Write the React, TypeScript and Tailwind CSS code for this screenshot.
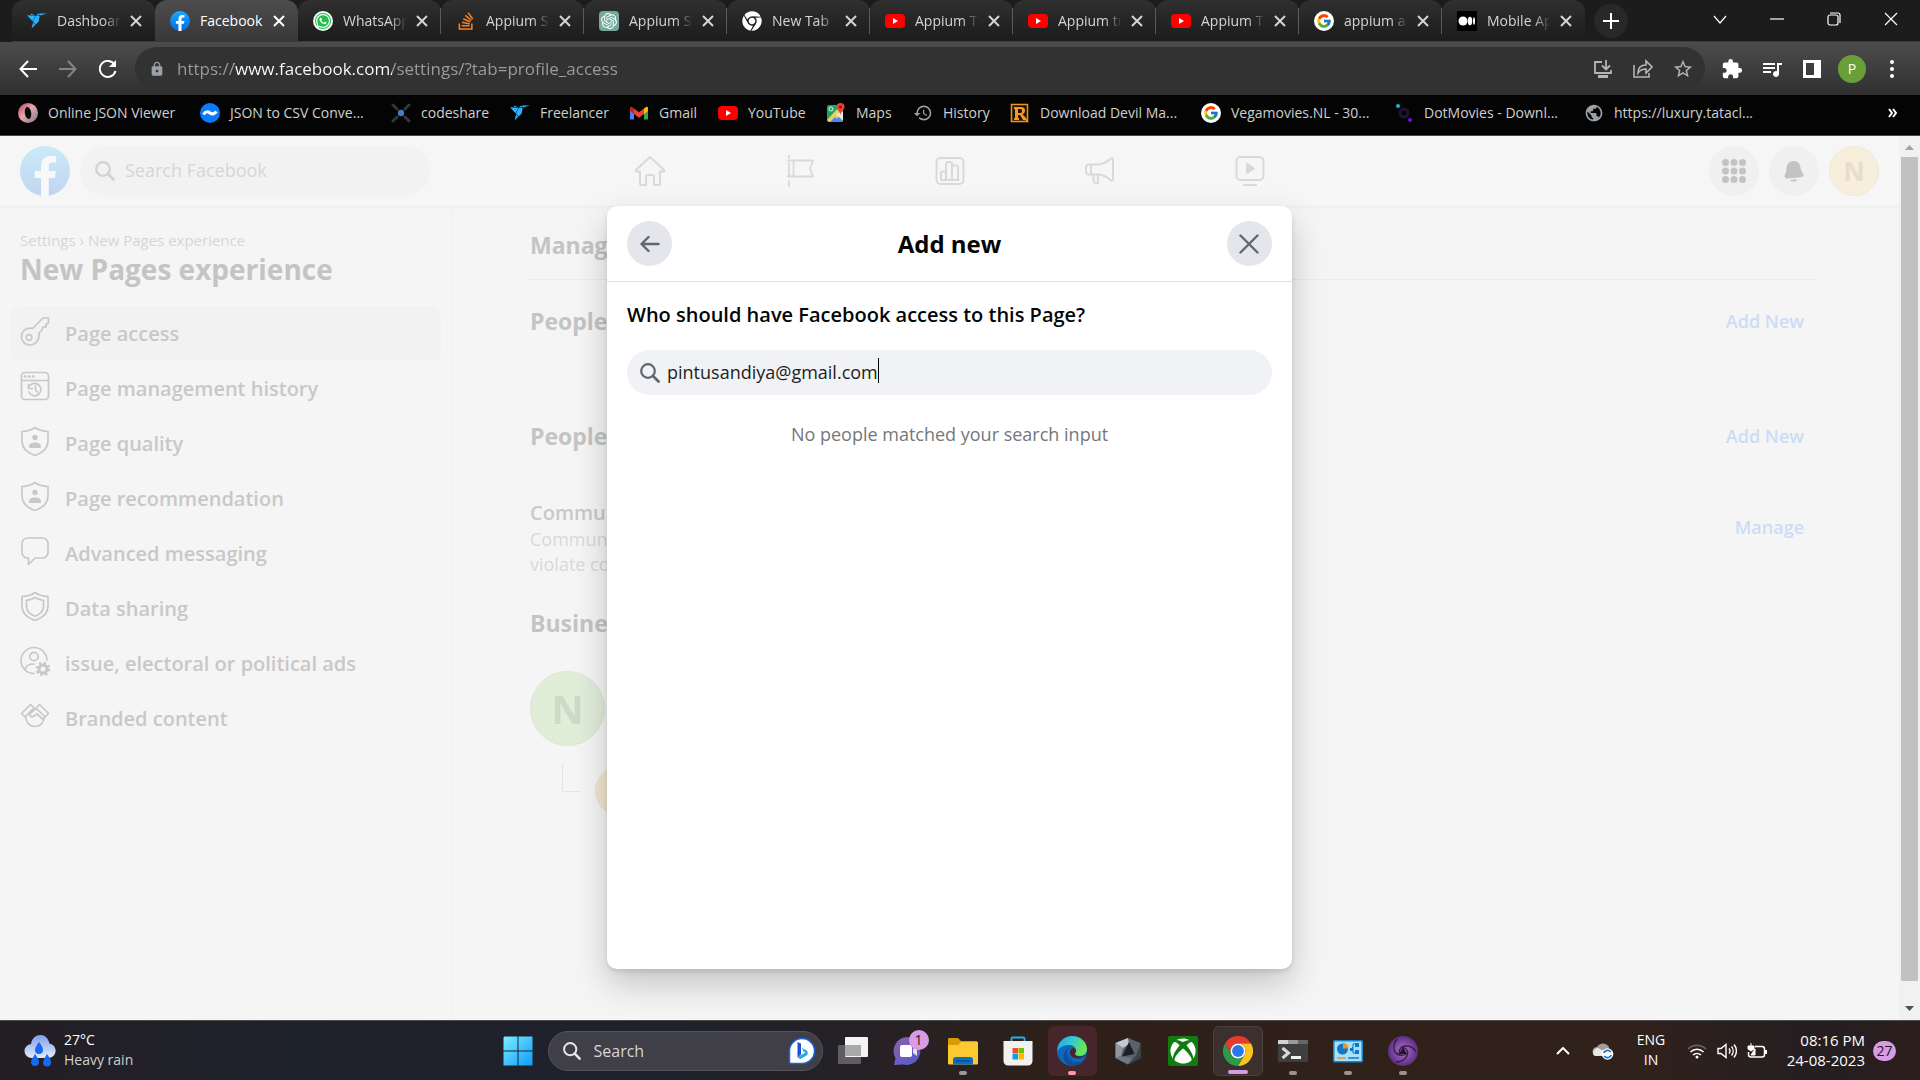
import React, { useState } from "react";
import { FcGoogle } from "react-icons/fc";
import { FaStackOverflow, FaWhatsapp, FaChrome, FaXbox } from "react-icons/fa";
import { SiFreelancer, SiOpenai } from "react-icons/si";
import {
  MdExtension,
  MdHistory,
  MdLock,
  MdQueueMusic,
  MdStarBorder,
  MdPublic,
} from "react-icons/md";

type Children = { children?: React.ReactNode };

/* ---------- brand icons ---------- */

function FacebookLogo({ id, from, to, mark, className }: { id: string; from: string; to: string; mark: string; className: string }) {
  return (
    <svg viewBox="0 0 50 50" className={className} aria-hidden="true">
      <defs>
        <linearGradient id={id} x1="0" y1="0" x2="0" y2="1">
          <stop offset="0" stopColor={from} />
          <stop offset="1" stopColor={to} />
        </linearGradient>
      </defs>
      <circle cx="25" cy="25" r="25" fill={`url(#${id})`} />
      <path
        fill={mark}
        d="M21 50V32h-6.300v-7H21v-4.500C21 14 24.500 10 31 10h5v6.500h-3.300c-3 0-3.900 1.500-3.900 4V25H36l-1.200 7h-6v18z"
      />
    </svg>
  );
}

function YouTube() {
  return (
    <svg viewBox="0 0 20 20" className="size-5" aria-hidden="true">
      <rect y="3" width="20" height="14" rx="4" fill="#f00" />
      <path d="M8 7l5 3-5 3z" fill="#fff" />
    </svg>
  );
}

function GoogleG() {
  return (
    <span className="flex size-5 items-center justify-center rounded-full bg-white">
      <FcGoogle className="size-4" />
    </span>
  );
}

function WhatsApp() {
  return (
    <span className="flex size-5 items-center justify-center rounded-full bg-[#f4fff4]">
      <span className="flex size-4 items-center justify-center rounded-full bg-[#1fc14b] text-white">
        <FaWhatsapp className="size-4" />
      </span>
    </span>
  );
}

function OpenAi() {
  return (
    <span className="flex size-5 items-center justify-center rounded-sm bg-[#74aa9c] text-white">
      <SiOpenai className="size-4" />
    </span>
  );
}

function MediumIcon() {
  return (
    <svg viewBox="0 0 20 20" className="size-5" aria-hidden="true">
      <rect width="20" height="20" rx="1" fill="#000" />
      <circle cx="6" cy="10" r="4.500" fill="#fff" />
      <ellipse cx="13" cy="10" rx="2.200" ry="4.200" fill="#fff" />
      <ellipse cx="17" cy="10" rx="1" ry="3.800" fill="#fff" />
    </svg>
  );
}

function JsonRing() {
  return (
    <svg viewBox="0 0 20 20" className="size-5" aria-hidden="true">
      <defs>
        <linearGradient id="ring" x1="0" y1="0" x2="1" y2="1">
          <stop offset="0" stopColor="#b4394d" />
          <stop offset="0.450" stopColor="#e6a9ae" />
          <stop offset="1" stopColor="#77777b" />
        </linearGradient>
      </defs>
      <circle cx="10" cy="10" r="10" fill="url(#ring)" />
      <ellipse cx="10" cy="10" rx="3.200" ry="6" fill="#090909" transform="rotate(-8 10 10)" />
    </svg>
  );
}

function CsvIcon() {
  return (
    <svg viewBox="0 0 20 20" className="size-5" aria-hidden="true">
      <circle cx="10" cy="10" r="10" fill="#0a7bff" />
      <path d="M3.500 11.500c2-3.500 4.500-3 6.500-1.500s4 1.500 6.500-1.500" fill="none" stroke="#fff" strokeWidth="3" />
    </svg>
  );
}

function CodeshareIcon() {
  return (
    <svg viewBox="0 0 20 20" className="size-5" aria-hidden="true">
      <path d="M2 2l4 4M18 2l-4 4M2 18l4-4M18 18l-4-4" stroke="#30353f" strokeWidth="3" strokeLinecap="round" />
      <circle cx="10" cy="10" r="3.200" fill="#4a78c8" />
    </svg>
  );
}

function GmailIcon() {
  return (
    <svg viewBox="0 0 20 20" className="size-5" aria-hidden="true">
      <path d="M1 5v11.500h4V8z" fill="#4285f4" />
      <path d="M19 5v11.500h-4V8z" fill="#34a853" />
      <path d="M15 5.500L17 4c1-.6 2 0 2 1.300V8l-4 3z" fill="#fbbc04" />
      <path d="M5 5.500L3 4C2 3.400 1 4 1 5.300V8l4 3z" fill="#c5221f" />
      <path d="M5 5.500l5 3.800 5-3.800V11l-5 3.800L5 11z" fill="#ea4335" />
    </svg>
  );
}

function MapsIcon() {
  return (
    <svg viewBox="0 0 20 20" className="size-5" aria-hidden="true">
      <rect x="1" y="2" width="16" height="17" rx="2" fill="#1fa463" />
      <path d="M3 19l7-8 7 8z" fill="#4a89f3" />
      <path d="M1 17L13 4l4 5-9 10H3z" fill="#fdd663" opacity="0.900" />
      <path d="M4 19l5-5 5 5z" fill="#4a89f3" />
      <path d="M10 11l7 7V9z" fill="#e8eaed" />
      <path d="M14.500 0a4 4 0 0 1 4 4c0 3-3.500 4-4 8-.5-4-4-5-4-8a4 4 0 0 1 4-4z" fill="#ea4335" />
      <circle cx="14.500" cy="4" r="1.500" fill="#811411" />
      <circle cx="5" cy="6" r="2" fill="none" stroke="#d8f3e4" strokeWidth="1" />
    </svg>
  );
}

function RockstarIcon() {
  return (
    <svg viewBox="0 0 20 20" className="size-5" aria-hidden="true">
      <rect x="1.500" y="1.500" width="16" height="17" fill="#1a1208" stroke="#f29219" strokeWidth="1.500" />
      <path
        fill="#f8981d"
        fillRule="evenodd"
        d="M4 4h7c3 0 4 1.500 4 3.500S14 11 12.500 11.300L16 15l3 5-4-3-2 0-3-5H8v3h1v2H4v-2h1V6H4zm4 2v4h2.500c1 0 1.500-.8 1.500-2s-.5-2-1.500-2z"
      />
    </svg>
  );
}

function DotMoviesIcon() {
  return (
    <svg viewBox="0 0 20 20" className="size-5" aria-hidden="true">
      <circle cx="10" cy="10" r="4" fill="none" stroke="#211330" strokeWidth="3" />
      <circle cx="4" cy="3" r="2" fill="#0fb5e8" />
      <circle cx="16" cy="17" r="2" fill="#6a11e8" />
    </svg>
  );
}

function ChromeLogo() {
  return (
    <svg viewBox="0 0 48 48" className="size-[30px]" aria-hidden="true">
      <path d="M3.200 12A24 24 0 0 1 44.800 12H24A12 12 0 0 0 13.600 30z" fill="#e33b2e" />
      <path d="M44.800 12A24 24 0 0 1 24 48L34.400 30A12 12 0 0 0 24 12z" fill="#fcc31e" />
      <path d="M24 48A24 24 0 0 1 3.200 12L13.600 30A12 12 0 0 0 34.400 30z" fill="#2c9c47" />
      <circle cx="24" cy="24" r="12" fill="#fff" />
      <circle cx="24" cy="24" r="9.500" fill="#2c77e8" />
    </svg>
  );
}

/* ---------- browser chrome ---------- */

const bird = <SiFreelancer className="size-5 text-[#29b2fe]" />;
const youtube = <YouTube />;
const google = <GoogleG />;

const tabs = [
  { title: "Dashboard", icon: bird },
  { title: "Facebook", icon: <FacebookLogo id="fbTab" from="#18acfe" to="#0866e8" mark="#fff" className="size-5" />, active: true },
  { title: "WhatsApp", icon: <WhatsApp /> },
  { title: "Appium Studio", icon: <FaStackOverflow className="size-5 text-[#f48024]" /> },
  { title: "Appium Studio", icon: <OpenAi /> },
  { title: "New Tab", icon: <FaChrome className="size-5 text-white" /> },
  { title: "Appium Tutorial", icon: youtube },
  { title: "Appium tutorial", icon: youtube },
  { title: "Appium Tutorial", icon: youtube },
  { title: "appium automation", icon: google },
  { title: "Mobile App", icon: <MediumIcon /> },
];

function TabStrip() {
  return (
    <div className="flex h-[42px] items-stretch bg-[#1c1c1c] pl-3">
      {tabs.map((t, i) => (
        <div
          key={i}
          className={
            t.active
              ? "flex w-[143px] min-w-0 items-center rounded-t-xl bg-linear-to-b from-[#4d4d4d] to-[#383838] pl-[15px] text-white"
              : "flex w-[143px] min-w-0 items-center rounded-t-xl border-b border-[#3d3d3d] bg-linear-to-b from-[#303030] to-[#1b1b1b] pl-[15px] text-[#d5d5d5]"
          }
        >
          <span className="flex size-5 shrink-0 items-center">{t.icon}</span>
          <button
            className={
              t.active
                ? "ml-[10px] w-[65px] overflow-hidden text-left text-sm whitespace-nowrap"
                : "ml-[10px] w-[65px] overflow-hidden text-left text-sm whitespace-nowrap [mask-image:linear-gradient(to_right,black_72%,transparent_98%)]"
            }
          >
            {t.title}
          </button>
          <button aria-label={`Close ${t.title}`} className="ml-2 size-3">
            <svg viewBox="0 0 12 12" className="size-3" stroke="currentColor" strokeWidth="2">
              <path d="M1 1l10 10M11 1L1 11" />
            </svg>
          </button>
          {i > 1 && i < tabs.length - 1 && <span className="ml-auto h-[26px] w-px bg-[#5a5a5a]" />}
        </div>
      ))}
      <div className="flex flex-1 items-center border-b border-[#3d3d3d] pl-[9px] text-white">
        <button aria-label="New tab" className="flex size-[34px] items-center justify-center rounded-full bg-[#282828]">
          <svg viewBox="0 0 16 16" className="size-4" stroke="currentColor" strokeWidth="2">
            <path d="M8 0v16M0 8h16" />
          </svg>
        </button>
        <div className="ml-auto flex pr-px pb-1">
          <WindowButton label="Search tabs">
            <path d="M1 4l6 7 6-7" />
          </WindowButton>
          <WindowButton label="Minimize">
            <path d="M0 7h14" />
          </WindowButton>
          <WindowButton label="Restore">
            <rect x="1" y="3" width="10" height="10" rx="2" />
            <path d="M3 1h8a2 2 0 0 1 2 2v8" />
          </WindowButton>
          <WindowButton label="Close">
            <path d="M1 1l12 12M13 1L1 13" />
          </WindowButton>
        </div>
      </div>
    </div>
  );
}

function WindowButton({ label, children }: { label: string } & Children) {
  return (
    <button aria-label={label} className="flex w-[57px] items-center justify-center">
      <svg viewBox="0 0 14 14" className="size-[14px]" fill="none" stroke="currentColor" strokeWidth="1.200">
        {children}
      </svg>
    </button>
  );
}

function ToolButton({ label, className = "text-white", children }: { label: string; className?: string } & Children) {
  return (
    <button aria-label={label} className={`flex w-10 items-center justify-center ${className}`}>
      {children}
    </button>
  );
}

function Toolbar() {
  return (
    <div className="flex h-[53px] items-center bg-linear-to-b from-[#4c4c4c] to-[#303030] pl-2">
      <ToolButton label="Back">
        <svg viewBox="0 0 18 18" className="size-[18px]" fill="none" stroke="currentColor" strokeWidth="2">
          <path d="M18 9H2M9 1L1.500 9 9 17" />
        </svg>
      </ToolButton>
      <ToolButton label="Forward" className="text-[#858585]">
        <svg viewBox="0 0 18 18" className="size-[18px]" fill="none" stroke="currentColor" strokeWidth="2">
          <path d="M0 9h16M9 1l7.500 8L9 17" />
        </svg>
      </ToolButton>
      <ToolButton label="Reload">
        <svg viewBox="0 0 18 18" className="size-[18px]" fill="none" stroke="currentColor" strokeWidth="2">
          <path d="M15.500 4.500A8 8 0 1 0 16.500 11" />
          <path d="M17 0v7h-7z" fill="currentColor" stroke="none" />
        </svg>
      </ToolButton>
      <div className="ml-[7px] flex h-[43px] flex-1 items-center rounded-full bg-[#323232] pr-[2px] pl-[14px] text-[#b5b5b5]">
        <MdLock className="size-4 text-[#9aa0a6]" />
        <input
          aria-label="Address"
          defaultValue="https://www.facebook.com/settings/?tab=profile_access"
          className="ml-3 min-w-0 flex-1 bg-transparent bg-[linear-gradient(to_right,#9d9d9d_57px,white_57px,white_215px,#9d9d9d_215px)] bg-clip-text text-[17px] text-transparent caret-white outline-none"
        />
        <ToolButton label="Install app" className="text-[#b5b5b5]">
          <svg viewBox="0 0 18 18" className="size-[18px]" fill="none" stroke="currentColor" strokeWidth="1.800">
            <path d="M8 2H1v11h16V10M12 0v9M8 5.500l4 4 4-4" />
            <path d="M4 16.500h10" strokeWidth="3" />
          </svg>
        </ToolButton>
        <ToolButton label="Share" className="text-[#b5b5b5]">
          <svg viewBox="0 0 20 20" className="size-5" fill="none" stroke="currentColor" strokeWidth="1.600">
            <path d="M1 6v12h15v-4" />
            <path d="M5 14c0-5 3-8 8-8V2l6 6-6 6v-4c-4 0-6 1-8 4z" />
          </svg>
        </ToolButton>
        <ToolButton label="Bookmark" className="text-[#b5b5b5]">
          <MdStarBorder className="size-[22px]" />
        </ToolButton>
      </div>
      <div className="ml-[7px] flex h-full items-center pr-2">
        <ToolButton label="Extensions">
          <MdExtension className="size-[22px]" />
        </ToolButton>
        <ToolButton label="Media">
          <MdQueueMusic className="size-6" />
        </ToolButton>
        <ToolButton label="Side panel">
          <svg viewBox="0 0 18 18" className="size-[18px]">
            <path fill="currentColor" fillRule="evenodd" d="M0 0h18v18H0zm3 3v12h8V3z" />
          </svg>
        </ToolButton>
        <ToolButton label="Profile">
          <span className="flex size-7 items-center justify-center rounded-full bg-[#689f38] text-sm">P</span>
        </ToolButton>
        <ToolButton label="Menu">
          <svg viewBox="0 0 4 18" className="h-[18px]" fill="currentColor">
            <circle cx="2" cy="2" r="2" />
            <circle cx="2" cy="9" r="2" />
            <circle cx="2" cy="16" r="2" />
          </svg>
        </ToolButton>
      </div>
    </div>
  );
}

const bookmarks = [
  { label: "Online JSON Viewer", icon: <JsonRing />, width: "w-[182px]" },
  { label: "JSON to CSV Conve...", icon: <CsvIcon />, width: "w-[191px]" },
  { label: "codeshare", icon: <CodeshareIcon />, width: "w-[119px]" },
  { label: "Freelancer", icon: bird, width: "w-[119px]" },
  { label: "Gmail", icon: <GmailIcon />, width: "w-[89px]" },
  { label: "YouTube", icon: youtube, width: "w-[108px]" },
  { label: "Maps", icon: <MapsIcon />, width: "w-[87px]" },
  { label: "History", icon: <MdHistory className="size-5 text-[#9aa0a6]" />, width: "w-[97px]" },
  { label: "Download Devil Ma...", icon: <RockstarIcon />, width: "w-[191px]" },
  { label: "Vegamovies.NL - 30...", icon: google, width: "w-[193px]" },
  { label: "DotMovies - Downl...", icon: <DotMoviesIcon />, width: "w-[190px]" },
  { label: "https://luxury.tatacl...", icon: <MdPublic className="size-5 text-[#9aa0a6]" />, width: "w-[190px]" },
];

function Bookmarks() {
  return (
    <nav aria-label="Bookmarks" className="flex h-[41px] items-center border-b border-[#4d4648] bg-[#040404] pr-[22px] pb-1 pl-[18px]">
      {bookmarks.map((b) => (
        <a key={b.label} href="#" className={`flex shrink-0 items-center gap-[10px] text-sm whitespace-nowrap text-[#cfcfcf] ${b.width}`}>
          {b.icon}
          {b.label}
        </a>
      ))}
      <button aria-label="More bookmarks" className="ml-auto text-white">
        <svg viewBox="0 0 10 10" className="size-[10px]" fill="none" stroke="currentColor" strokeWidth="2">
          <path d="M1 1l3 4-3 4M5 1l3 4-3 4" />
        </svg>
      </button>
    </nav>
  );
}

/* ---------- page header ---------- */

function NavIcon({ label, children }: { label: string } & Children) {
  return (
    <a href="#" aria-label={label} className="flex w-[150px] justify-center text-[#d9d9d9]">
      <svg viewBox="0 0 32 32" className="size-8" fill="none" stroke="currentColor" strokeWidth="2" strokeLinejoin="round" strokeLinecap="round">
        {children}
      </svg>
    </a>
  );
}

function SearchGlyph({ className }: { className: string }) {
  return (
    <svg viewBox="0 0 20 20" className={className} fill="none" stroke="currentColor" strokeWidth="2.200" strokeLinecap="round" aria-hidden="true">
      <circle cx="8" cy="8" r="6.800" />
      <path d="M13 13l5.500 5.500" strokeWidth="2.800" />
    </svg>
  );
}

function PageHeader() {
  return (
    <header className="grid h-[70px] grid-cols-[1fr_auto_1fr] items-center bg-[#f6f6f6] px-5 shadow-[0_1px_3px_#e9e9e9]">
      <div className="flex items-center gap-[10px]">
        <a href="#" aria-label="Facebook">
          <FacebookLogo id="fbHead" from="#c9ebf9" to="#c1d4f0" mark="#f8f8f8" className="size-[50px]" />
        </a>
        <label className="flex h-[50px] w-[350px] items-center rounded-full bg-[#f2f2f2] px-[15px] text-[#d2d2d2]">
          <SearchGlyph className="size-5" />
          <input
            aria-label="Search Facebook"
            placeholder="Search Facebook"
            className="ml-[10px] min-w-0 flex-1 bg-transparent pb-[2px] text-lg outline-none placeholder:text-[#d6d6d6]"
          />
        </label>
      </div>
      <nav className="flex" aria-label="Main">
        <NavIcon label="Home">
          <path d="M16 2L2 15v1.500h4V29a1 1 0 0 0 1 1h5v-8a2 2 0 0 1 2-2h4a2 2 0 0 1 2 2v8h5a1 1 0 0 0 1-1V16.500h4V15z" />
        </NavIcon>
        <NavIcon label="Pages">
          <path d="M5 1v2M5 8v13M5 26v6M4 5.500h25l-3 8 3 8H4M9.500 5.500v16" strokeWidth="1.800" />
        </NavIcon>
        <NavIcon label="Insights">
          <rect x="2.500" y="3" width="27" height="26" rx="4" />
          <path d="M7 25v-7a1.500 1.500 0 0 1 1.500-1.500H12V25M12 25V9a2 2 0 0 1 2-2h2a2 2 0 0 1 2 2v16M18.500 10.500H22a2 2 0 0 1 2 2V25M7 25h18" />
        </NavIcon>
        <NavIcon label="Ad Centre">
          <path d="M4 9.500h10c6 0 9-3 13-6 1-.6 2 0 2 1v20c0 1-1 1.600-2 1-4-3-7-6-13-6H4c-1.200 0-2-2-2-5s.8-5 2-5zM7 9.500v10M9 20l1 7c.2 1 1 1.500 2 1.500s2-.5 2-1.500v-7" />
        </NavIcon>
        <NavIcon label="Watch">
          <rect x="2.500" y="2" width="27" height="23" rx="4" />
          <path d="M10 30h12" />
          <path d="M13 9l7 4.500-7 4.500z" fill="currentColor" />
        </NavIcon>
      </nav>
      <div className="flex justify-end gap-[10px]">
        <button aria-label="Menu" className="flex size-[50px] items-center justify-center rounded-full bg-[#f0f0f0] text-[#c3c3c3]">
          <svg viewBox="0 0 24 24" className="size-6" fill="currentColor">
            {[3.5, 12, 20.5].map((y) => [3.5, 12, 20.5].map((x) => <circle key={`${x}${y}`} cx={x} cy={y} r="3.500" />))}
          </svg>
        </button>
        <button aria-label="Notifications" className="flex size-[50px] items-center justify-center rounded-full bg-[#f0f0f0] text-[#c3c3c3]">
          <svg viewBox="0 0 24 24" className="size-6" fill="currentColor">
            <path d="M11.500 2c4 0 6.500 2.600 7 6.500.4 3 1 4 2.500 5.800 1.200 1.600.3 3.700-1.600 3.900L5 19.500c-2 .2-3.200-1.600-2.200-3.400C3.800 14 4.300 12.500 4.500 9c.2-4 3-7 7-7zM8 21l7-.7c-.5 1.500-1.800 2.300-3.500 2.300S8.500 22 8 21z" />
          </svg>
        </button>
        <button aria-label="Account" className="flex size-[50px] items-center justify-center rounded-full border border-[#f1e9da] bg-[#f7eedc] text-[26px] font-bold text-[#e8dcca]">
          N
        </button>
      </div>
    </header>
  );
}

/* ---------- sidebar ---------- */

const shield = <path d="M15 1.500c3.500 2.500 8 3.700 13 4v9.500C28 22 22.500 27 15 29.500 7.500 27 2 22 2 15V5.500c5-.3 9.500-1.500 13-4z" />;
const shieldPerson = (
  <>
    {shield}
    <circle cx="15" cy="11.500" r="2.700" fill="currentColor" stroke="none" />
    <path d="M9 20.500c0-2.700 2.500-4 6-4s6 1.300 6 4c0 1-.5 1.500-1.500 1.500h-9c-1 0-1.500-.5-1.500-1.500z" fill="currentColor" stroke="none" />
  </>
);

const sideItems = [
  {
    label: "Page access",
    active: true,
    icon: (
      <>
        <path d="M12.500 12.500L23 2h5.500v4.500l-2.500 2v2.500h-3L22 14l-3 3c1 6-3 12-9 12-5 0-8.500-3.500-8.500-8.500 0-5.500 5-9.500 11-8z" />
        <circle cx="9" cy="21.500" r="2.800" />
      </>
    ),
  },
  {
    label: "Page management history",
    icon: (
      <>
        <rect x="1.500" y="1.500" width="27" height="27" rx="3.500" />
        <path d="M2 9.500h26M10 14.500a6.200 6.200 0 1 1-1 6.500M8.500 13.500v4h4M15.500 15v4l2 2" />
        <path d="M5 5.500h.5M9 5.500h.5M13 5.500h.5" strokeWidth="2.500" />
      </>
    ),
  },
  { label: "Page quality", icon: shieldPerson },
  { label: "Page recommendation", icon: shieldPerson },
  {
    label: "Advanced messaging",
    icon: <path d="M7.500 2h15A5.500 5.500 0 0 1 28 7.500v9a5.500 5.500 0 0 1-5.500 5.500H15l-6.500 6.500V22H7.500A5.500 5.500 0 0 1 2 16.500v-9A5.500 5.500 0 0 1 7.500 2z" />,
  },
  {
    label: "Data sharing",
    icon: (
      <>
        {shield}
        <path d="M15 6.500c2.500 1.500 5 2.500 8.500 2.800v6c0 4.500-3.500 8-8.500 10-5-2-8.500-5.500-8.500-10v-6C10 9 12.500 8 15 6.500z" />
      </>
    ),
  },
  {
    label: "issue, electoral or political ads",
    icon: (
      <>
        <path d="M27 14A13 13 0 1 0 14 27.500" />
        <circle cx="14" cy="10.500" r="4.200" />
        <path d="M5 23c1-3.500 4-5 9-5" />
        <circle cx="23" cy="23" r="4" strokeWidth="3" />
        <circle cx="23" cy="23" r="6.200" strokeWidth="2.400" strokeDasharray="2.400 2.470" strokeLinecap="butt" />
      </>
    ),
  },
  {
    label: "Branded content",
    icon: (
      <>
        <path d="M1.500 12.500l9-9 3.500 3.500M28.500 12.500l-9-9-3.500 3.500M1.500 12.500l3.500 3.500M28.500 12.500L25 16M14 7l-8.500 8.500M16 7l8.500 8.500M5.500 15c0 6 4 10.500 9.500 10.500S24.500 21 24.500 15M16 7l-6 6c-1 1.500 1 3.500 3 2.500l4-2.500 5.500 5" />
      </>
    ),
  },
];

function Sidebar() {
  return (
    <aside className="w-[452px] shrink-0 border-r border-[#efefef] px-[10px] pt-[23px]">
      <p className="px-[10px] text-[15px] leading-[22px] text-[#d5d5d5]">Settings › New Pages experience</p>
      <h1 className="px-[10px] text-[28px] leading-9 font-bold text-[#c4c4c4]">New Pages experience</h1>
      <ul className="mt-[19px]">
        {sideItems.map((s) => (
          <li key={s.label}>
            <a
              href="#"
              className={
                s.active
                  ? "flex h-[55px] items-center gap-[15px] rounded-[10px] bg-[#f2f2f2] px-[10px] text-xl font-semibold text-[#c8c8c8]"
                  : "flex h-[55px] items-center gap-[15px] rounded-[10px] px-[10px] text-xl font-semibold text-[#c8c8c8]"
              }
            >
              <svg viewBox="0 0 30 30" className="mb-[5px] size-[30px]" fill="none" stroke="currentColor" strokeWidth="1.700" strokeLinejoin="round" strokeLinecap="round" aria-hidden="true">
                {s.icon}
              </svg>
              {s.label}
            </a>
          </li>
        ))}
      </ul>
    </aside>
  );
}

/* ---------- settings content ---------- */

function Section({ title, action, className }: { title: string; action?: string; className: string }) {
  return (
    <div className={`flex items-center justify-between pr-[14px] ${className}`}>
      <h2 className="text-[23px] leading-8 font-bold whitespace-nowrap text-[#c4c4c4]">{title}</h2>
      {action && (
        <button className="text-lg font-semibold text-[#ccdcf7]">{action}</button>
      )}
    </div>
  );
}

function Settings() {
  return (
    <main className="min-w-0 flex-1 pt-[23px] pr-[81px] pl-[78px]">
      <h2 className="border-b border-[#ebebeb] pb-[18px] text-[23px] leading-8 font-bold text-[#c4c4c4]">Manage access</h2>
      <Section title="People with Facebook access" action="Add New" className="mt-[25px]" />
      <Section title="People with task access" action="Add New" className="mt-[83px]" />
      <div className="mt-[47px] flex items-start justify-between pr-[14px]">
        <div>
          <h3 className="text-xl leading-7 font-semibold text-[#c8c8c8]">Community managers</h3>
          <p className="text-lg leading-[25px] text-[#d9d9d9]">
            Community managers can moderate chats that
            <br />
            violate community standards.
          </p>
        </div>
        <button className="mt-[14px] text-lg font-semibold text-[#ccdcf7]">Manage</button>
      </div>
      <Section title="Business account access" className="mt-[30px]" />
      <div className="mt-8">
        <div className="flex size-[75px] items-center justify-center rounded-full border border-[#dbe8d4] bg-[#e0edd9] text-[40px] font-bold text-[#cddac8]">N</div>
        <div className="mt-[18px] ml-8 flex">
          <span className="h-[28px] w-[18px] border-b border-l border-[#e5e5e5]" />
          <span className="mt-[2px] ml-[15px] size-[50px] rounded-full border border-[#efe3cd] bg-[#f1e6d1]" />
        </div>
      </div>
    </main>
  );
}

function Scrollbar() {
  return (
    <div className="flex w-[21px] flex-col items-center bg-[#f1f1f1]" aria-hidden="true">
      <svg viewBox="0 0 17 21" className="h-[21px] w-[17px]">
        <path d="M4 14l4.500-5 4.500 5z" fill="#a3a3a3" />
      </svg>
      <div className="w-[17px] flex-1 bg-[#c1c1c1]" />
      <div className="h-[18px]" />
      <svg viewBox="0 0 17 21" className="h-[21px] w-[17px]">
        <path d="M4 7l4.500 5L13 7z" fill="#505050" />
      </svg>
    </div>
  );
}

/* ---------- dialog ---------- */

function AddNewDialog() {
  const [query, setQuery] = useState("pintusandiya@gmail.com");
  return (
    <div className="absolute inset-0 flex justify-center pt-[70px] pb-[51px]">
      <div
        role="dialog"
        aria-labelledby="dialog-title"
        className="w-[685px] rounded-[10px] bg-white shadow-[0_15px_35px_rgba(0,0,0,0.2),0_3px_5px_rgba(0,0,0,0.1)]"
      >
        <div className="flex h-[76px] items-center justify-between border-b border-[#e0e1e4] px-5">
          <button aria-label="Back" className="flex size-[45px] items-center justify-center rounded-full bg-[#e4e6eb] text-[#606770]">
            <svg viewBox="0 0 20 20" className="size-5" fill="none" stroke="currentColor" strokeWidth="2.400" strokeLinecap="round" strokeLinejoin="round">
              <path d="M18.500 10H2M8.500 3L1.500 10l7 7" />
            </svg>
          </button>
          <h2 id="dialog-title" className="text-2xl font-bold text-[#050505]">
            Add new
          </h2>
          <button aria-label="Close" className="flex size-[45px] items-center justify-center rounded-full bg-[#e4e6eb] text-[#606770]">
            <svg viewBox="0 0 20 20" className="size-5" stroke="currentColor" strokeWidth="2.400" strokeLinecap="round">
              <path d="M1.500 1.500l17 17M18.500 1.500l-17 17" />
            </svg>
          </button>
        </div>
        <div className="px-5 pt-[18px]">
          <h3 className="text-xl leading-[30px] font-semibold text-[#050505]">Who should have Facebook access to this Page?</h3>
          <label className="mt-5 flex h-[45px] items-center rounded-full bg-[#f0f2f5] px-[13px] text-[#606770]">
            <SearchGlyph className="size-5" />
            <input
              aria-label="Search people"
              value={query}
              onChange={(e) => setQuery(e.target.value)}
              className="ml-[7px] field-sizing-content bg-transparent pb-[2px] text-lg text-[#1c1e21] outline-none"
            />
            <span className="mb-1 h-[25px] w-px bg-black" />
          </label>
          <p className="mt-[26px] text-center text-lg leading-[26px] text-[#75777b]">No people matched your search input</p>
        </div>
      </div>
    </div>
  );
}

/* ---------- taskbar ---------- */

function TaskIcon({ label, dot, box, children }: { label: string; dot?: string; box?: string } & Children) {
  return (
    <button aria-label={label} className={`relative flex h-[50px] w-[50px] items-center justify-center rounded-md ${box ?? ""}`}>
      {children}
      {dot && <span className={`absolute bottom-px h-1 rounded-full ${dot}`} />}
    </button>
  );
}

function Taskbar() {
  return (
    <footer className="grid h-[60px] grid-cols-[1fr_auto_1fr] items-center border-t border-[#4b4d4c] bg-[linear-gradient(to_right,#241e24,#1e222d_15%,#1e212c_35%,#262126_45%,#2e2019_55%,#31211b_85%,#241e22_95%,#2d1e1c)] text-white">
      <button className="flex items-center gap-2 pl-6 text-left">
        <svg viewBox="0 0 32 34" className="h-[34px] w-8" aria-hidden="true">
          <defs>
            <linearGradient id="cloud" x1="0" y1="0" x2="0" y2="1">
              <stop offset="0" stopColor="#7f9fe8" />
              <stop offset="1" stopColor="#e2eafa" />
            </linearGradient>
          </defs>
          <path d="M8 24a7 7 0 0 1-1-14C8 4 12 1 16.500 1S24 4 25.500 9.500A7.300 7.300 0 0 1 24 24z" fill="url(#cloud)" />
          <path d="M15 8c3 3.500 4 6 4 8a4 4 0 0 1-8 0c0-2 1.500-5 4-8zM11 20c3 4 4 6 4 8a4 4 0 0 1-8 0c0-2 2-4.500 4-8zM23 20c3 4 4 6 4 8.500a4 4 0 0 1-8 0c0-2 2-5 4-8.500z" fill="#1769f2" />
        </svg>
        <span className="pb-[2px] text-sm leading-5">
          <span className="block">27°C</span>
          <span className="block text-[#cfcfd2]">Heavy rain</span>
        </span>
      </button>

      <div className="flex items-center gap-[5px]">
        <TaskIcon label="Start">
          <svg viewBox="0 0 30 30" className="size-[30px]">
            <defs>
              <linearGradient id="win" x1="0" y1="0" x2="1" y2="1">
                <stop offset="0" stopColor="#7beeff" />
                <stop offset="1" stopColor="#0d9bfb" />
              </linearGradient>
            </defs>
            <path d="M1.500.5h13v14H.5v-13zM15.500.5h14v14h-14zM.5 15.500h14v14H.5zM15.500 15.500h14v14h-14z" fill="url(#win)" />
          </svg>
        </TaskIcon>
        <label className="flex h-10 w-[275px] items-center rounded-full border border-[#56545b] bg-[#403e46] pr-[6px] pl-[14px]">
          <SearchGlyph className="size-[18px] text-[#e6e6e8]" />
          <input
            aria-label="Search Windows"
            placeholder="Search"
            className="ml-[13px] min-w-0 flex-1 bg-transparent text-base outline-none placeholder:text-[#d6d6d8]"
          />
          <svg viewBox="0 0 28 28" className="size-7" aria-hidden="true">
            <path d="M1.500 25.500V14A12.500 12.500 0 1 1 14 26.500H3z" fill="#fff" stroke="#1a66e0" strokeWidth="1.500" />
            <path d="M9.500 5l3.500 1.500v11l-3.500 3z" fill="#1b52d8" />
            <path d="M13 18l-3.500 2.500 3 1.500 6-3.500c2-1.500 1.500-4.500-.5-5.500l-4-2 1.500 3.500 2 1z" fill="#23a9e8" />
          </svg>
        </label>
        <TaskIcon label="Task view">
          <svg viewBox="0 0 30 30" className="size-[30px]">
            <rect y="9" width="23" height="19" rx="1" fill="#5e5e5e" />
            <rect x="7" y="1" width="23" height="20" rx="1" fill="#f3f3f3" />
            <path d="M8 9h15v11H7V9z" fill="#a9a9a9" />
          </svg>
        </TaskIcon>
        <TaskIcon label="Chat">
          <svg viewBox="0 0 30 30" className="size-[30px]">
            <defs>
              <linearGradient id="chat" x1="0" y1="0" x2="1" y2="1">
                <stop offset="0" stopColor="#8d60a8" />
                <stop offset="1" stopColor="#4f5bd0" />
              </linearGradient>
            </defs>
            <path d="M15 1a14 14 0 1 1-5 27.500L1 29l1.500-7A14 14 0 0 1 15 1z" fill="url(#chat)" />
            <rect x="7" y="9" width="12" height="12" rx="2" fill="#fff" />
            <path d="M20 13l4-3v10l-4-3z" fill="#e6def5" />
          </svg>
          <span className="absolute top-1 right-1 flex size-5 items-center justify-center rounded-full bg-[#d99be4] text-sm text-[#222]">1</span>
        </TaskIcon>
        <TaskIcon label="File Explorer" dot="w-2 bg-[#9a9a9a]">
          <svg viewBox="0 0 30 30" className="size-[30px]">
            <path d="M0 3.500C0 2.500.8 2 1.500 2H10l3 3h15c1 0 1.500.5 1.500 1.500V12H0z" fill="#dd9a06" />
            <path d="M0 9h10l3-3h17v21.500a1 1 0 0 1-1 1H1a1 1 0 0 1-1-1z" fill="#fdc933" />
            <path d="M5 28.500v-5c0-1.500 1-2.500 2.500-2.500h15c1.500 0 2.500 1 2.500 2.500v5z" fill="#0c6dc2" />
            <path d="M8 25h14" stroke="#0a4b94" strokeWidth="1.500" />
          </svg>
        </TaskIcon>
        <TaskIcon label="Microsoft Store">
          <svg viewBox="0 0 30 30" className="size-[30px]">
            <path d="M8.500 6V2.500a1 1 0 0 1 1-1h11a1 1 0 0 1 1 1V6" fill="none" stroke="#1cb2f2" strokeWidth="1.800" />
            <path d="M.5 5h29v20a4.500 4.500 0 0 1-4.500 4.500H5A4.500 4.500 0 0 1 .5 25z" fill="#f1f1f1" />
            <path d="M9.500 12H15v5.500H9.500z" fill="#f25022" />
            <path d="M15.500 12H21v5.500h-5.500z" fill="#7fba00" />
            <path d="M9.500 18H15v5.500H9.500z" fill="#00a4ef" />
            <path d="M15.500 18H21v5.500h-5.500z" fill="#ffb900" />
          </svg>
        </TaskIcon>
        <TaskIcon label="Edge" dot="w-2 bg-[#ff96a0]" box="border-r border-[#31191c] bg-[#46262a]">
          <svg viewBox="0 0 30 30" className="size-[30px]">
            <defs>
              <linearGradient id="edge" x1="0" y1="0" x2="1" y2="0.300">
                <stop offset="0" stopColor="#28a4dc" />
                <stop offset="0.500" stopColor="#31c6d8" />
                <stop offset="1" stopColor="#69e84d" />
              </linearGradient>
            </defs>
            <circle cx="15" cy="15" r="15" fill="#0d68bb" />
            <path d="M.5 12C2 5 8 0 15 0c8.500 0 15 6 15 13 0 4-3 7-7 7-3 0-5-1-5-2s1-1.500 1-3.500C19 11 16 9 12 9 7 9 2 11 .2 16z" fill="url(#edge)" />
            <path d="M10 16c0 7 6 11 12 10 2-.4 4-1.500 6-3-3 5-8 7-13 7C8 29 5 22 7 17c1-3 4-5 7-5-2 0-4 2-4 4z" fill="#0f4f9c" />
            <path d="M16 12c2 0 3 1.500 3 3s-1 2-1 3c0 1.500 2 2.500 5 2.500 2 0 4-.5 6-2-1 2-4 4-8 4-5 0-8-3-8-6 0-2 1-4 3-4.500z" fill="#46262a" />
          </svg>
        </TaskIcon>
        <TaskIcon label="Unity">
          <svg viewBox="0 0 30 30" className="size-[30px]">
            <path d="M15 2l12.500 5v15L15 28.500 2.500 22V7z" fill="#59616a" />
            <path d="M15 2L2.500 7 10 12l6-4z" fill="#c3cbd2" />
            <path d="M2.500 7v15L8 20l2-8z" fill="#8d97a1" />
            <path d="M2.500 22L15 28.500l4-6L8 20z" fill="#6f7983" />
            <path d="M15 28.500L27.500 22V7l-4 12z" fill="#3b4249" />
            <path d="M16 6l5.500 12L9 20.500z" fill="#1b1f24" />
          </svg>
        </TaskIcon>
        <TaskIcon label="Xbox">
          <span className="flex size-[30px] items-center justify-center rounded-xs bg-[#107c10]">
            <FaXbox className="size-[26px] text-white" />
          </span>
        </TaskIcon>
        <TaskIcon label="Chrome" dot="w-5 bg-[#d79be4]" box="border border-[#4a403e] bg-[#3b302e]">
          <ChromeLogo />
        </TaskIcon>
        <TaskIcon label="Terminal" dot="w-2 bg-[#9a9490]">
          <svg viewBox="0 0 30 30" className="size-[30px]">
            <rect y="4" width="30" height="22" rx="1" fill="#3f3f41" />
            <path d="M0 5a1 1 0 0 1 1-1h9v4H0z" fill="#d6d3d4" />
            <path d="M10 4h10v4H10z" fill="#9b999a" />
            <path d="M20 4h9a1 1 0 0 1 1 1v3H20z" fill="#666" />
            <path d="M4.500 12l6 5-6 5" fill="none" stroke="#d9d9d9" strokeWidth="3" />
            <path d="M13 21.500h10" stroke="#f0f0f0" strokeWidth="3" />
          </svg>
        </TaskIcon>
        <TaskIcon label="Control Panel" dot="w-2 bg-[#9a9490]">
          <svg viewBox="0 0 30 30" className="size-[30px]">
            <rect x="0.750" y="4.750" width="28.500" height="21" rx="1" fill="#a8e0fa" stroke="#1583cc" strokeWidth="1.500" />
            <circle cx="9.500" cy="13" r="5.500" fill="#1277c4" />
            <path d="M10 12.500V6.500a6 6 0 0 1 5.500 6z" fill="#f78e1e" />
            <path d="M17 14l3-3v-3h2M20 11v6h2" stroke="#1277c4" fill="none" />
            <path d="M22 7h4v4h-4zM22 14h4v4h-4zM17 12h3v3h-3z" fill="#1277c4" />
            <path d="M4 22h9" stroke="#f78e1e" strokeWidth="1.500" />
            <path d="M15 22h11" stroke="#1277c4" strokeWidth="1.500" />
          </svg>
        </TaskIcon>
        <TaskIcon label="Recorder" dot="w-2 bg-[#9a9490]">
          <svg viewBox="0 0 30 30" className="size-[30px]">
            <defs>
              <radialGradient id="orb">
                <stop offset="0.300" stopColor="#9560b4" />
                <stop offset="1" stopColor="#5e2d84" />
              </radialGradient>
            </defs>
            <circle cx="15" cy="15" r="15" fill="url(#orb)" />
            <path d="M15 11l4 7h-8z" fill="#2a1420" />
            <path d="M11 18C11 13 13 10 18 10c4 0 8 2 10 6M15 11c4 2 6 5 4 9-2 4-6 6-11 6M19 18c-5 2-9 2-12-2C5 12 6 7 9 3" fill="none" stroke="#371a4c" strokeWidth="1.300" />
          </svg>
        </TaskIcon>
      </div>

      <div className="flex items-center justify-end pr-6 text-sm leading-5">
        <button aria-label="Hidden icons" className="flex w-10 justify-center">
          <svg viewBox="0 0 14 8" className="w-[14px]" fill="none" stroke="currentColor" strokeWidth="2">
            <path d="M1 7l6-6 6 6" />
          </svg>
        </button>
        <button aria-label="OneDrive" className="flex w-10 justify-center">
          <svg viewBox="0 0 22 18" className="w-[22px]">
            <path d="M5 14a4.500 4.500 0 0 1 0-9 7 7 0 0 1 12 0v9z" fill="#a19b9a" />
            <path d="M1 11a5 5 0 0 1 5-5l6 3v5H4a3 3 0 0 1-3-3z" fill="#e9e6e5" />
            <circle cx="15.500" cy="12" r="5.800" fill="#fff" />
            <path d="M11.800 11a4 4 0 0 1 7-1M19.200 13a4 4 0 0 1-7 1" fill="none" stroke="#1876c9" strokeWidth="1.800" />
          </svg>
        </button>
        <button className="w-14 pb-[2px] text-center">
          ENG
          <br />
          IN
        </button>
        <button aria-label="Network, sound and battery" className="ml-2 flex items-center gap-[10px]">
          <svg viewBox="0 0 20 16" className="w-5" fill="none" stroke="currentColor" strokeWidth="1.600">
            <path d="M1 6a13 13 0 0 1 18 0" stroke="#6b605d" />
            <path d="M3.500 9a9 9 0 0 1 13 0M6 12a6 6 0 0 1 8 0" />
            <circle cx="10" cy="14" r="1.500" fill="currentColor" stroke="none" />
          </svg>
          <svg viewBox="0 0 20 16" className="w-5" fill="none" stroke="currentColor" strokeWidth="1.400">
            <path d="M1 5.500h3l5-4v13l-5-4H1zM12 5.500a4 4 0 0 1 0 5M14.500 3.500a7 7 0 0 1 0 9M17 1.500a10 10 0 0 1 0 13" />
          </svg>
          <svg viewBox="0 0 20 16" className="w-5" fill="none" stroke="currentColor" strokeWidth="1.500">
            <path d="M8 3.500h7a2.500 2.500 0 0 1 2.500 2.500v5.500A2.500 2.500 0 0 1 15 14H4a2.500 2.500 0 0 1-2.500-2.500V9" />
            <path d="M19 7v4" strokeWidth="2" />
            <path d="M4 0v3M1 3h6v3L4 8 1 6zM4 12l4-6v6z" fill="currentColor" strokeWidth="1" />
          </svg>
        </button>
        <button className="w-[98px] pb-[2px] text-right text-[15px]">
          08:16 PM
          <br />
          24-08-2023
        </button>
        <button aria-label="27 notifications" className="ml-2 flex h-5 w-[23px] items-center justify-center rounded-full bg-[#d99be4] text-sm text-[#1c1c1c]">
          27
        </button>
      </div>
    </footer>
  );
}

export default function App() {
  return (
    <div className="flex h-screen flex-col overflow-hidden font-['Open_Sans',sans-serif]">
      <TabStrip />
      <Toolbar />
      <Bookmarks />
      <div className="flex min-h-0 flex-1">
        <div className="relative flex min-w-0 flex-1 flex-col overflow-hidden bg-[#f5f5f5]">
          <PageHeader />
          <div className="flex min-h-0 flex-1">
            <Sidebar />
            <Settings />
          </div>
          <AddNewDialog />
        </div>
        <Scrollbar />
      </div>
      <Taskbar />
    </div>
  );
}
